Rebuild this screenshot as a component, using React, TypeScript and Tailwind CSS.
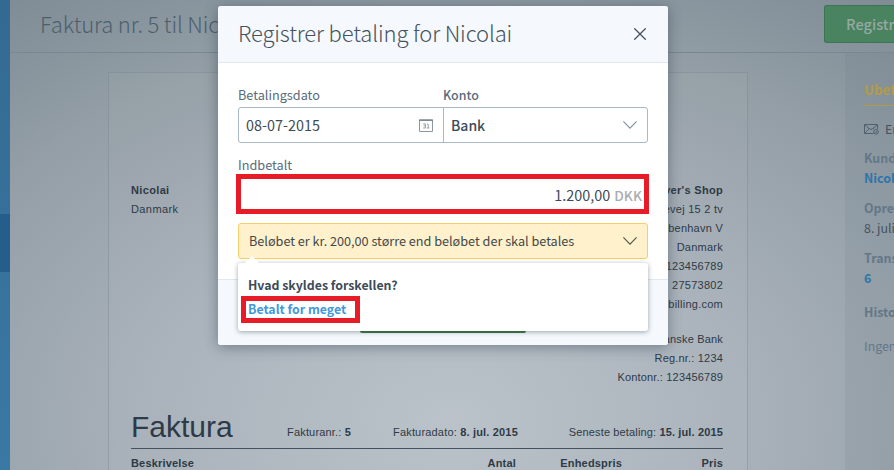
import clsx from "clsx";
import type { ReactNode } from "react";

const companyLines = [
  "Scheelevej 15 2 tv",
  "1620 København V",
  "Danmark",
  "Tlf. 123456789",
  "CVR  27573802",
  "oliver@oliversbilling.com",
];

const bankLines = ["Danske Bank", "Reg.nr.: 1234", "Kontonr.: 123456789"];

function ChevronDown({ className }: { className?: string }) {
  return (
    <svg
      viewBox="0 0 14 8"
      className={clsx("h-2 w-3.5 fill-none", className)}
      strokeWidth="1.1"
    >
      <path d="M0.4 0.4 L7 7.2 L13.6 0.4" />
    </svg>
  );
}

function CalendarIcon() {
  return (
    <svg viewBox="0 0 14 13" className="h-[13px] w-3.5">
      <path
        d="M0.5 1 H13.5 V12.5 H0.5 Z"
        fill="none"
        stroke="#8c979f"
        strokeWidth="1"
      />
      <path d="M0 1.2 H14" stroke="#77838c" strokeWidth="1.4" />
      <path
        d="M4.2 4.9 H6.4 V9 H4.2 M4.6 6.9 H6.4 M8 5.2 H9.2 V9 M7.8 9 H10.4"
        fill="none"
        stroke="#8c979f"
        strokeWidth="0.9"
      />
    </svg>
  );
}

function MailIcon() {
  return (
    <svg
      viewBox="0 0 16 12"
      className="h-3 w-4 shrink-0 fill-none stroke-[#4f606e]"
      strokeWidth="1"
    >
      <path d="M13.5 6 V1.5 H0.5 V10.5 H9.5" />
      <path d="M1 2 L5 5.5 M13 2 L9 5.5 M4 5 Q7 8 10 5 M1 10 L4.5 6.5" />
      <circle cx="12" cy="8.8" r="2.3" />
      <path d="M11 8.8 L11.8 9.6 L13 8" />
    </svg>
  );
}

function SideItem({
  title,
  children,
}: {
  title: string;
  children?: ReactNode;
}) {
  return (
    <div className="mb-2.5 leading-5">
      <p className="font-bold text-[#637788]">{title}</p>
      {children}
    </div>
  );
}

function InvoicePaper() {
  return (
    <article className="ml-[97px] mt-[19px] h-[420px] w-[640px] shrink-0 border border-[#75828c]/40 bg-white/3 pl-[22px] pr-[24px] font-['Liberation_Sans',Arial,sans-serif] text-[11px] leading-[19px] tracking-[0.18px] text-[#2e3a45]">
      <div className="flex justify-between pt-[108px]">
        <div>
          <p className="font-bold tracking-[0.35px]">Nicolai</p>
          <p className="tracking-[0.4px]">Danmark</p>
        </div>
        <div className="text-right">
          <p className="font-bold tracking-[0.3px]">Oliver's Shop</p>
          {companyLines.map((line) => (
            <p key={line} className="whitespace-pre tracking-[0.25px]">
              {line}
            </p>
          ))}
          <div className="mt-4">
            {bankLines.map((line) => (
              <p key={line}>{line}</p>
            ))}
          </div>
        </div>
      </div>

      <div className="mt-[19px] flex h-[43px] items-end border-b border-[#43525e]">
        <h2 className="w-[156px] pb-[5px] text-[30px] leading-8 tracking-normal">
          Faktura
        </h2>
        <p className="w-[106px] pb-[6px]">
          Fakturanr.: <b>5</b>
        </p>
        <p className="pb-[6px]">
          Fakturadato: <b>8. jul. 2015</b>
        </p>
        <p className="ml-auto pb-[6px] tracking-[0.14px]">
          Seneste betaling: <b>15. jul. 2015</b>
        </p>
      </div>

      <div className="flex pt-[5px] font-bold">
        <span className="flex-1">Beskrivelse</span>
        <span className="w-[100px] text-right">Antal</span>
        <span className="w-[106px] text-right">Enhedspris</span>
        <span className="w-[101px] text-right">Pris</span>
      </div>
    </article>
  );
}

function InvoiceSidebar() {
  return (
    <aside className="ml-auto w-[49px] shrink-0 overflow-hidden whitespace-nowrap bg-[#5f7080]/12 pl-[19px] pt-[27px] text-[12.4px]">
      <p className="h-[26px] border-b border-[#b39c3d] text-[13.3px] font-bold leading-5 text-[#b39c45]">
        Ubetalt
      </p>
      <div className="mb-[9px] mt-[13px] flex items-center gap-[5px] leading-5 text-[#43525f]">
        <MailIcon />
        <span>Email sendt</span>
      </div>
      <SideItem title="Kunde">
        <p className="font-bold text-[#2f75a9]">Nicolai</p>
      </SideItem>
      <SideItem title="Oprettet">
        <p className="text-[#43525f]">8. juli 2015</p>
      </SideItem>
      <SideItem title="Transaktion">
        <p className="font-bold text-[#2f75a9]">6</p>
      </SideItem>
      <div className="mt-[14px]">
        <SideItem title="Historik" />
      </div>
      <p className="mt-[14px] leading-5 text-[#637788]">Ingen</p>
    </aside>
  );
}

function PaymentModal() {
  return (
    <div className="absolute left-[218px] top-1.5 flex h-[339px] w-[450px] flex-col rounded-[3px] bg-white shadow-[0_2px_14px_rgba(40,55,70,0.45)]">
      <header className="flex h-[57px] items-center justify-between rounded-t-[3px] border-b border-[#e1e8ee] bg-[#f5f9fd] px-5 pr-[22px]">
        <h1 className="-mt-1 whitespace-nowrap text-[22px] font-light leading-8 tracking-[-0.12px] text-[#46535e]">
          Registrer betaling for Nicolai
        </h1>
        <button type="button" aria-label="Luk">
          <svg
            viewBox="0 0 12 12"
            className="h-3 w-3 stroke-[#46535e]"
            strokeWidth="1.3"
          >
            <path d="M0.3 0.3 L11.7 11.7 M11.7 0.3 L0.3 11.7" />
          </svg>
        </button>
      </header>

      <div className="flex h-[216px] flex-col px-5 pt-[22px]">
        <div className="flex h-[22px] text-[12.7px] leading-5 text-[#586b7b]">
          <span className="w-[205px]">Betalingsdato</span>
          <span className="text-[12.4px] font-medium">Konto</span>
        </div>
        <div className="flex h-9 shrink-0 rounded-[3px] border border-[#a9b9c5] text-[14.4px] text-[#3d4b57]">
          <div className="flex w-[205px] items-center justify-between border-r border-[#a9b9c5] pl-[7px] pr-2.5">
            <span>08-07-2015</span>
            <CalendarIcon />
          </div>
          <div className="flex flex-1 items-center justify-between pl-[7px] pr-2.5">
            <span className="text-[14px] font-medium">Bank</span>
            <ChevronDown className="stroke-[#81909c]" />
          </div>
        </div>

        <p className="mt-3 h-5 shrink-0 text-[12.7px] leading-5 text-[#586b7b]">
          Indbetalt
        </p>
        <div className="-ml-0.5 -mr-px mt-[-1px] flex h-10 shrink-0 items-center justify-end gap-1 border-[5px] border-[#e81c26] pr-0.5 pt-0.5 text-[14.4px] text-[#3d4b57]">
          <span>1.200,00</span>
          <span className="text-[13.7px] font-medium text-[#a9adb1]">DKK</span>
        </div>

        <div className="mt-[9px] flex h-9 shrink-0 items-center justify-between rounded-[3px] border border-[#f4cf68] bg-[#fff1cb] pl-2.5 pr-2.5 text-[12.7px] tracking-[-0.02px] text-[#43494a]">
          <span>Beløbet er kr. 200,00 større end beløbet der skal betales</span>
          <ChevronDown className="stroke-[#50524c]" />
        </div>
      </div>

      <footer className="flex flex-1 justify-center rounded-b-[3px] border-t border-[#e1e8ee] bg-[#f5f9fd]">
        <div className="h-[53px] w-[166px] rounded-[2px] bg-[#3b7a45]" />
      </footer>

      <DifferenceMenu />
    </div>
  );
}

function DifferenceMenu() {
  return (
    <div className="absolute left-5 top-[257px] h-[68px] w-[410px] rounded-[3px] bg-white pl-[3px] pt-3 text-[12.35px] font-bold leading-5 shadow-[0_1px_5px_rgba(40,55,70,0.45)]">
      <svg viewBox="0 0 16 8" className="absolute -top-[7px] left-1.5 h-2 w-4">
        <path d="M0 8 L8 0 L16 8 Z" fill="#fff" />
      </svg>
      <p className="pl-[7px] text-[#3d4b57]">Hvad skyldes forskellen?</p>
      <a className="mt-px flex h-[27px] w-[119px] items-center border-[5px] border-[#e81c26] pb-0.5 pl-0.5 text-[#3f98dc]">
        Betalt for meget
      </a>
    </div>
  );
}

export default function App() {
  return (
    <div className="relative flex h-[470px] w-[894px] overflow-hidden bg-[radial-gradient(ellipse_760px_520px_at_450px_420px,#b9c1c9_0%,#a7b0b8_42%,#939ea6_74%,#7f8c95_100%)] font-['Noto_Sans_CJK_SC',sans-serif]">
      <nav className="w-2.5 shrink-0 bg-linear-to-b from-[#336a92] to-[#3a79a5] pt-[214px]">
        <div className="h-[58px] bg-[#265e8b]" />
      </nav>

      <div className="flex min-w-0 flex-1 flex-col">
        <header className="flex h-[53px] shrink-0 justify-between border-b border-[#7a8791] pl-[30px]">
          <h1 className="whitespace-nowrap text-[22px] font-light leading-[46px] tracking-[-0.15px] text-[#4d5f6e]">
            Faktura nr. 5 til Nicolai
          </h1>
          <div className="mt-[5px] h-[38px] w-[70px] overflow-hidden whitespace-nowrap rounded-l-[3px] border border-r-0 border-[#3a7556] bg-[#49835f] pl-[21px] text-[14.6px] font-medium leading-9 text-[#96a9a5]">
            Registrer betaling
          </div>
        </header>
        <main className="flex min-h-0 flex-1 pl-px">
          <InvoicePaper />
          <InvoiceSidebar />
        </main>
      </div>

      <PaymentModal />
    </div>
  );
}
